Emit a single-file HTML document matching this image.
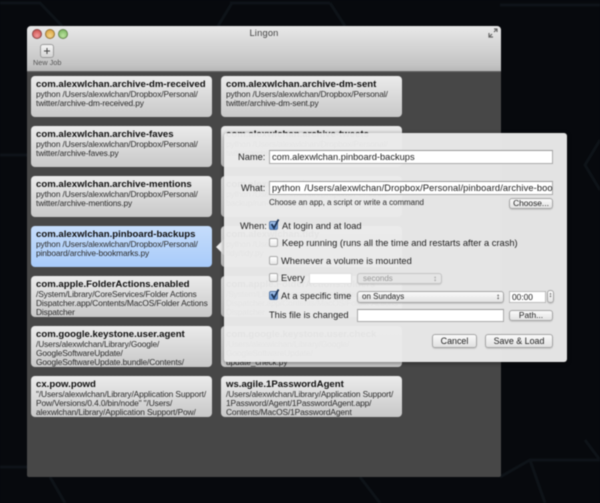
<!DOCTYPE html>
<html><head><meta charset="utf-8"><style>
html,body{margin:0;padding:0;background:#07090d}
#r{position:relative;width:600px;height:503px;overflow:hidden;background:#07090d;font-family:"Liberation Sans",sans-serif;filter:blur(.45px)}
#r div,#r span{position:absolute;white-space:nowrap}
.win{left:27px;top:26px;width:474px;height:451px;background:#474747;border-radius:4px 4px 2px 2px;overflow:hidden}
.bar{left:0;top:0;width:474px;height:45px;background:linear-gradient(#e8e8e8,#c4c4c4 85%,#b8b8b8);border-bottom:1px solid #666}
.c{width:181px;height:41px;border-radius:4px;background:linear-gradient(#ebebeb,#c8c8c8);overflow:hidden}
.c.s{background:linear-gradient(#c6ddfb,#a8cbfa)}
.t{left:5px;top:3px;font:bold 9.6px/12px "Liberation Sans",sans-serif;color:#111}
.l{left:5px;font-size:8.4px;line-height:10px;letter-spacing:-.13px;color:#2c2c2c}
.a{top:13px}.b{top:22px}.d{top:31px}
.pop{left:224px;top:133px;width:343px;height:229px;background:rgba(234,234,234,.97);border-radius:3px;box-shadow:0 1px 5px rgba(0,0,0,.45)}
.arr{left:216px;top:239px;width:0;height:0;border:8px solid transparent;border-left:0;border-right:8px solid #ececec}
.x{font-size:9.3px;line-height:12px;color:#1d1d1d}
.f{background:#fff;border:1px solid #aaa;border-top-color:#999;box-sizing:border-box;font-size:9.3px;line-height:12px;color:#1d1d1d;padding-left:2px;overflow:hidden}
.btn{background:linear-gradient(#fafafa,#e2e2e2);border:1px solid #a5a5a5;border-radius:3px;box-sizing:border-box;text-align:center;color:#222;font-size:8.4px;box-shadow:0 1px 1px rgba(0,0,0,.12)}
.cb{width:7px;height:7px;left:269px;background:linear-gradient(#fff,#e8e8e8);border:1px solid #aaa;border-radius:2px}
.cb.on{background:linear-gradient(#a9c6ec,#5c8ed0);border-color:#5577a5}
</style></head><body><div id="r">

<svg style="position:absolute;left:0;top:0" width="600" height="503" fill="none" stroke="#0e1318" stroke-width="3">
<path d="M-5 3H40L62 26M230 3H330M218 26L232 3M330 3L345 26M600 5H500M500 477L530 460H600L585 440M530 460L545 503M360 477L380 503M50 477L65 503M0 155H27M0 467H27M600 140L585 165L600 190"/>
</svg>

<div class="win">
<div class="bar"></div>
<span style="left:0;top:1px;width:474px;text-align:center;font-size:9.3px;line-height:12px;letter-spacing:.2px;color:#444">Lingon</span>
<div style="left:5px;top:3px;width:8px;height:8px;border-radius:50%;background:radial-gradient(circle at 50% 70%,#ee9a9a,#c9423f);border:.5px solid #8a4a4a"></div>
<div style="left:17.5px;top:3px;width:8px;height:8px;border-radius:50%;background:radial-gradient(circle at 50% 70%,#f2d38a,#d79a2e);border:.5px solid #96763c"></div>
<div style="left:30.5px;top:3px;width:8px;height:8px;border-radius:50%;background:radial-gradient(circle at 50% 70%,#bde3a0,#6eae54);border:.5px solid #68864f"></div>
<svg style="position:absolute;left:461px;top:2px" width="10" height="10" fill="none" stroke="#666" stroke-width="1.2"><path d="M1 9L4 6M1 5V9H5M6 4L9 1M6 1H9V4"/></svg>
<div style="left:13px;top:18px;width:14px;height:14px;box-sizing:border-box;background:linear-gradient(#f4f4f4,#d4d4d4);border:1px solid #9b9b9b;border-radius:3px"></div>
<svg style="position:absolute;left:17px;top:22px" width="6" height="6" stroke="#444" stroke-width="1"><path d="M3 0V6M0 3H6"/></svg>
<span style="left:6px;top:32px;font-size:7.3px;line-height:10px;color:#555">New Job</span>
</div>

<div class="c" style="left:31px;top:76px"><span class="t">com.alexwlchan.archive-dm-received</span><span class="l a">python /Users/alexwlchan/Dropbox/Personal/</span><span class="l b">twitter/archive-dm-received.py</span></div>
<div class="c" style="left:221px;top:76px"><span class="t">com.alexwlchan.archive-dm-sent</span><span class="l a">python /Users/alexwlchan/Dropbox/Personal/</span><span class="l b">twitter/archive-dm-sent.py</span></div>
<div class="c" style="left:31px;top:126px"><span class="t">com.alexwlchan.archive-faves</span><span class="l a">python /Users/alexwlchan/Dropbox/Personal/</span><span class="l b">twitter/archive-faves.py</span></div>
<div class="c" style="left:221px;top:126px"><span class="t">com.alexwlchan.archive-tweets</span><span class="l a">python /Users/alexwlchan/Dropbox/Personal/</span><span class="l b">twitter/archive-tweets.py</span></div>
<div class="c" style="left:31px;top:176px"><span class="t">com.alexwlchan.archive-mentions</span><span class="l a">python /Users/alexwlchan/Dropbox/Personal/</span><span class="l b">twitter/archive-mentions.py</span></div>
<div class="c" style="left:221px;top:176px"><span class="t">com.alexwlchan.backup</span><span class="l a">python /Users/alexwlchan/Dropbox/Personal/</span><span class="l b">backup/run-backup.py</span></div>
<div class="c s" style="left:31px;top:226px"><span class="t">com.alexwlchan.pinboard-backups</span><span class="l a">python /Users/alexwlchan/Dropbox/Personal/</span><span class="l b">pinboard/archive-bookmarks.py</span></div>
<div class="c" style="left:221px;top:226px"><span class="t">com.alexwlchan.tidy</span><span class="l a">python /Users/alexwlchan/Dropbox/Personal/</span><span class="l b">tidy/tidy.py</span></div>
<div class="c" style="left:31px;top:276px"><span class="t">com.apple.FolderActions.enabled</span><span class="l a">/System/Library/CoreServices/Folder Actions</span><span class="l b">Dispatcher.app/Contents/MacOS/Folder Actions</span><span class="l d">Dispatcher</span></div>
<div class="c" style="left:221px;top:276px"><span class="t">com.apple.FolderActions.folders</span><span class="l a">/System/Library/CoreServices/Folder Actions</span><span class="l b">Dispatcher.app/Contents/MacOS/Folder Actions</span><span class="l d">Dispatcher</span></div>
<div class="c" style="left:31px;top:326px"><span class="t">com.google.keystone.user.agent</span><span class="l a">/Users/alexwlchan/Library/Google/</span><span class="l b">GoogleSoftwareUpdate/</span><span class="l d">GoogleSoftwareUpdate.bundle/Contents/</span></div>
<div class="c" style="left:221px;top:326px"><span class="t">com.google.keystone.user.check</span><span class="l a">/Users/alexwlchan/Library/Google/</span><span class="l b">GoogleSoftwareUpdate/</span><span class="l d">update_check.py</span></div>
<div class="c" style="left:31px;top:376px"><span class="t">cx.pow.powd</span><span class="l a">"/Users/alexwlchan/Library/Application Support/</span><span class="l b">Pow/Versions/0.4.0/bin/node" "/Users/</span><span class="l d">alexwlchan/Library/Application Support/Pow/</span></div>
<div class="c" style="left:221px;top:376px"><span class="t">ws.agile.1PasswordAgent</span><span class="l a">/Users/alexwlchan/Library/Application Support/</span><span class="l b">1Password/Agent/1PasswordAgent.app/</span><span class="l d">Contents/MacOS/1PasswordAgent</span></div>

<div class="arr"></div>
<div class="pop"></div>

<span class="x" style="left:238px;top:151px">Name:</span>
<div class="f" style="left:269px;top:150px;width:284px;height:14px">com.alexwlchan.pinboard-backups</div>
<span class="x" style="left:241px;top:182px">What:</span>
<div class="f" style="left:269px;top:181px;width:284px;height:14px;letter-spacing:.11px;word-spacing:1px">python /Users/alexwlchan/Dropbox/Personal/pinboard/archive-bookmarks.py</div>
<span style="left:269px;top:197px;font-size:8px;line-height:12px;letter-spacing:-.05px;color:#2a2a2a">Choose an app, a script or write a command</span>
<div class="btn" style="left:509px;top:198px;width:44px;height:11px;line-height:9px">Choose...</div>

<span class="x" style="left:240px;top:220px">When:</span>
<div class="cb on" style="top:221px"></div>
<svg style="position:absolute;left:269px;top:218px" width="11" height="12" fill="none" stroke="#1d3557" stroke-width="1.8"><path d="M2.5 6L5 10L9.5 1.5"/></svg>
<span class="x" style="left:282px;top:220px">At login and at load</span>
<div class="cb" style="top:238px"></div>
<span class="x" style="left:282px;top:237px">Keep running (runs all the time and restarts after a crash)</span>
<div class="cb" style="top:256px"></div>
<span class="x" style="left:281px;top:255px">Whenever a volume is mounted</span>
<div class="cb" style="top:273px"></div>
<span class="x" style="left:281px;top:272px">Every</span>
<div class="f" style="left:309px;top:273px;width:43px;height:11px;border-color:#ddd"></div>
<div class="btn" style="left:357px;top:273px;width:85px;height:11px;line-height:9px;text-align:left;padding-left:5px;color:#999;font-size:8px;background:#e4e4e4;border-color:#c4c4c4">seconds<span style="right:4px;top:0;color:#999">&#8597;</span></div>
<div class="cb on" style="top:291px"></div>
<svg style="position:absolute;left:269px;top:288px" width="11" height="12" fill="none" stroke="#1d3557" stroke-width="1.8"><path d="M2.5 6L5 10L9.5 1.5"/></svg>
<span class="x" style="left:281px;top:290px">At a specific time</span>
<div class="btn" style="left:357px;top:291px;width:147px;height:12px;line-height:10px;text-align:left;padding-left:4px;font-size:8px">on Sundays<span style="right:3px;top:0;color:#333">&#8597;</span></div>
<div class="f" style="left:509px;top:291px;width:37px;height:12px;line-height:10px;font-size:8.4px;border-color:#bbb">00:00</div>
<div class="btn" style="left:547px;top:290px;width:7px;height:13px;border-radius:3px;line-height:10px;font-size:7px">&#8597;</div>
<span class="x" style="left:269px;top:309px">This file is changed</span>
<div class="f" style="left:357px;top:309px;width:147px;height:13px"></div>
<div class="btn" style="left:509px;top:310px;width:44px;height:11px;line-height:9px">Path...</div>
<div class="btn" style="left:432px;top:334px;width:45px;height:14px;line-height:12px;font-size:8.9px">Cancel</div>
<div class="btn" style="left:485px;top:334px;width:68px;height:14px;line-height:12px;font-size:8.9px">Save &amp; Load</div>
</div></body></html>
